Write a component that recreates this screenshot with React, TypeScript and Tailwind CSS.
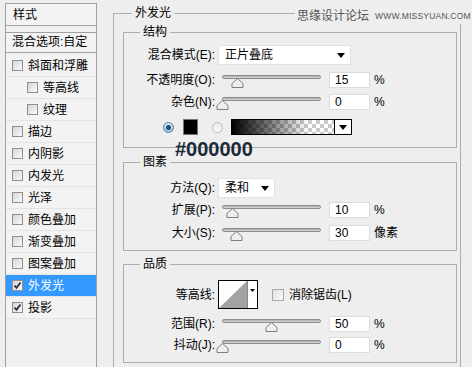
import React from "react"

const font = "font-['Liberation_Sans','Noto_Sans_CJK_SC',sans-serif]"

const styles = [
  { name: "斜面和浮雕", indent: false },
  { name: "等高线", indent: true },
  { name: "纹理", indent: true },
  { name: "描边", indent: false },
  { name: "内阴影", indent: false },
  { name: "内发光", indent: false },
  { name: "光泽", indent: false },
  { name: "颜色叠加", indent: false },
  { name: "渐变叠加", indent: false },
  { name: "图案叠加", indent: false },
  { name: "外发光", indent: false, checked: true, active: true },
  { name: "投影", indent: false, checked: true },
]

function Check({ checked }: { checked?: boolean }) {
  return (
    <span className="flex h-[11px] w-[11px] shrink-0 items-center justify-center border border-[#8f8f8f] bg-gradient-to-br from-[#d6d6d6] to-[#fafafa]">
      {checked && (
        <svg width="9" height="9" viewBox="0 0 9 9">
          <path d="M1.5 4.5 L3.5 6.8 L7.5 1.5" fill="none" stroke="#2a2a3a" strokeWidth="1.8" />
        </svg>
      )}
    </span>
  )
}

function Slider({ value }: { value: number }) {
  return (
    <div className="relative ml-[7px] h-[16px] w-[99px]">
      <div className="absolute left-0 right-0 top-[3px] h-[4px] rounded-full border border-[#8c8c8c] bg-gradient-to-b from-[#a8a8a8] to-[#dedede]" />
      <svg
        className="absolute top-[6px]"
        style={{ left: value * 98 - 6 }}
        width="13"
        height="10"
        viewBox="0 0 13 10"
      >
        <path d="M6.5 0.5 L12 5.5 L12 9.5 L1 9.5 L1 5.5 Z" fill="#eeeeee" stroke="#7e7e7e" />
      </svg>
    </div>
  )
}

function NumBox({ value }: { value: string }) {
  return (
    <div className="ml-[8px] h-[16px] w-[41px] border border-[#dcdcdc] bg-white pl-[5px] text-[12px] leading-[14px] text-black">
      {value}
    </div>
  )
}

function Label({ text }: { text: string }) {
  return <span className="w-[91px] shrink-0 text-right">{text}</span>
}

function SliderRow({
  label,
  value,
  pos,
  unit = "%",
  className,
}: {
  label: string
  value: string
  pos: number
  unit?: string
  className: string
}) {
  return (
    <div className={`flex h-[16px] items-center ${className}`}>
      <Label text={label} />
      <Slider value={pos} />
      <NumBox value={value} />
      <span className="ml-[4px]">{unit}</span>
    </div>
  )
}

function Arrow() {
  return (
    <svg width="8" height="5" viewBox="0 0 8 5">
      <path d="M0 0 H8 L4 5 Z" fill="#000" />
    </svg>
  )
}

function Group({ title, className, children }: { title: string; className: string; children: React.ReactNode }) {
  return (
    <fieldset className={`border border-[#adadad] ${className}`}>
      <legend className="ml-[16px] px-[3px] leading-[16px]">{title}</legend>
      {children}
    </fieldset>
  )
}

export default function App() {
  return (
    <div className={`relative flex h-[367px] w-[472px] overflow-hidden bg-[#eeeeee] text-[12px] text-black ${font}`}>
      {/* style list */}
      <div className="ml-[5px] mt-[3px] h-[380px] w-[92px] shrink-0 border border-[#a0a0a0] bg-[#f0f0f0]">
        <div className="h-[22px] border-b border-[#a0a0a0] bg-[#f3f3f3] pl-[7px] leading-[22px]">样式</div>
        <div className="mt-[6px] h-[21px] whitespace-nowrap border-y border-[#a0a0a0] bg-[#f3f3f3] pl-[6px] leading-[19px]">
          混合选项:自定
        </div>
        <div className="mt-[2px]">
          {styles.map((s) => (
            <div
              key={s.name}
              className={`flex h-[22px] items-center border-b border-[#e4e4e4] ${
                s.active ? "bg-[#3399ff] text-white" : "bg-[#f3f3f3]"
              } ${s.indent ? "pl-[21px]" : "pl-[6px]"}`}
            >
              <Check checked={s.checked} />
              <span className="ml-[5px]">{s.name}</span>
            </div>
          ))}
        </div>
      </div>

      {/* outer glow panel */}
      <fieldset className="ml-[16px] mt-[5px] h-[380px] w-[348px] shrink-0 border border-[#adadad] pl-[9px] pr-[3px]">
        <legend className="ml-[9px] px-[3px] leading-[16px]">外发光</legend>

        <Group title="结构" className="mt-[3px] pb-[12px]">
          <div className="mt-[5px] flex h-[20px] items-center">
            <Label text="混合模式(E):" />
            <div className="ml-[3px] flex h-[20px] w-[133px] items-center justify-between border border-[#e2e2e2] bg-white pl-[6px] pr-[5px]">
              <span>正片叠底</span>
              <Arrow />
            </div>
          </div>
          <SliderRow label="不透明度(O):" value="15" pos={0.15} className="mt-[7px]" />
          <SliderRow label="杂色(N):" value="0" pos={0} className="mt-[6px]" />
          <div className="mt-[9px] flex h-[16px] items-center pl-[39px]">
            <span className="flex h-[11px] w-[11px] items-center justify-center rounded-full border border-[#4a7fa8] bg-gradient-to-b from-[#dbe9f4] to-[#9fc2de]">
              <span className="h-[5px] w-[5px] rounded-full bg-[#1f4f7a]" />
            </span>
            <span className="ml-[9px] h-[16px] w-[15px] border border-[#777] bg-black" />
            <span className="ml-[14px] h-[11px] w-[11px] rounded-full border border-[#b8b8b8] bg-gradient-to-b from-[#e8e8e8] to-[#fafafa]" />
            <div className="ml-[8px] flex h-[16px] w-[121px] border border-black">
              <div className="h-full flex-1 bg-[linear-gradient(to_right,#000,rgba(0,0,0,0.55)_35%,rgba(0,0,0,0)_75%),conic-gradient(#c9c9c9_25%,#fff_0_50%,#c9c9c9_0_75%,#fff_0)] bg-[length:100%_100%,8px_8px]" />
              <div className="flex w-[17px] items-center justify-center border-l border-black bg-white">
                <Arrow />
              </div>
            </div>
          </div>
        </Group>

        <Group title="图素" className="mt-[6px] pb-[9px]">
          <div className="mt-[8px] flex h-[20px] items-center">
            <Label text="方法(Q):" />
            <div className="ml-[3px] flex h-[20px] w-[57px] items-center justify-between border border-[#e2e2e2] bg-white pl-[6px] pr-[5px]">
              <span>柔和</span>
              <Arrow />
            </div>
          </div>
          <SliderRow label="扩展(P):" value="10" pos={0.1} className="mt-[4px]" />
          <SliderRow label="大小(S):" value="30" pos={0.14} unit="像素" className="mt-[7px]" />
        </Group>

        <Group title="品质" className="mt-[5px] pb-[9px]">
          <div className="mt-[8px] flex h-[29px] items-center">
            <Label text="等高线:" />
            <div className="ml-[3px] flex h-[29px] w-[40px] border border-black">
              <svg className="flex-1 bg-white" viewBox="0 0 29 27" preserveAspectRatio="none">
                <path d="M0 27 L29 0 L29 27 Z" fill="#a3a3a3" />
              </svg>
              <div className="flex w-[10px] justify-center border-l border-[#888] bg-white pt-[8px]">
                <svg width="5" height="3" viewBox="0 0 5 3">
                  <path d="M0 0 H5 L2.5 3 Z" fill="#000" />
                </svg>
              </div>
            </div>
            <span className="ml-[14px] h-[12px] w-[12px] border border-[#a8a8a8] bg-gradient-to-br from-[#e2e2e2] to-[#fafafa]" />
            <span className="ml-[5px]">消除锯齿(L)</span>
          </div>
          <SliderRow label="范围(R):" value="50" pos={0.5} className="mt-[7px]" />
          <SliderRow label="抖动(J):" value="0" pos={0} className="mt-[5px]" />
        </Group>
      </fieldset>

      {/* watermark */}
      <div className="absolute left-[295px] top-[8px] flex h-[16px] items-center bg-[#eeeeee] pl-[2px] text-[#555]">
        <span className="text-[12px]">思缘设计论坛</span>
        <span className="ml-[6px] text-[8.5px] tracking-[0.2px]">WWW.MISSYUAN.COM</span>
      </div>

      {/* annotation */}
      <div className="absolute left-[175px] top-[139px] font-['Liberation_Sans',sans-serif] text-[20px] font-bold leading-[20px] text-[#1c2a38]">
        #000000
      </div>
    </div>
  )
}
